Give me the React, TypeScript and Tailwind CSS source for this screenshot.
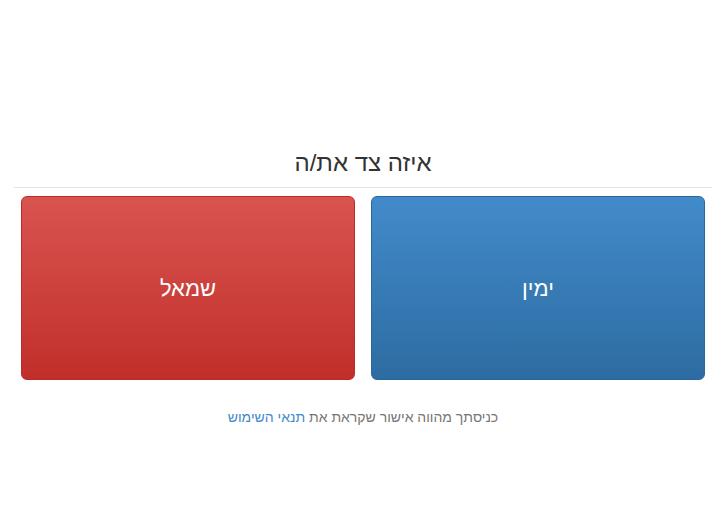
const App: React.FC = () => {
  return (
    <div
      dir="rtl"
      className="min-h-[531px] bg-white pt-[145px] pl-[14px] pr-[11px] font-['Liberation_Sans','DejaVu_Sans',sans-serif] text-[#333]"
    >
      <h1 className="border-b border-[#e5e5e5] pb-[6px] text-center text-[24px] leading-[36px] font-normal">
        איזה צד את/ה
      </h1>

      <div className="mt-[8px] flex gap-[16px] pl-[7px] pr-[7px]">
        <button
          type="button"
          className="flex h-[184px] w-[334px] items-center justify-center rounded-[6px] border border-[#2b669a] bg-gradient-to-b from-[#428bca] to-[#2d6ca2] text-[22px] text-white"
        >
          ימין
        </button>
        <button
          type="button"
          className="flex h-[184px] w-[334px] items-center justify-center rounded-[6px] border border-[#b92c28] bg-gradient-to-b from-[#d9534f] to-[#c12e2a] text-[22px] text-white"
        >
          שמאל
        </button>
      </div>

      <p className="mt-[27px] text-center text-[14px] text-[#777]">
        כניסתך מהווה אישור שקראת את{" "}
        <a href="#" className="text-[#428bca]">
          תנאי השימוש
        </a>
      </p>
    </div>
  );
};

export default App;
